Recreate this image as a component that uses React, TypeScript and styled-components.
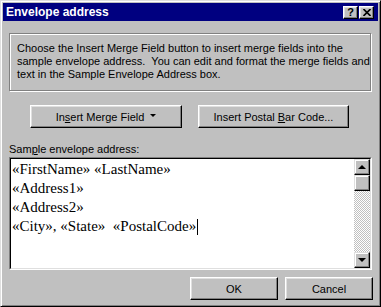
import styled, { createGlobalStyle } from 'styled-components';

const FACE = '#c0c0c0';

const GlobalStyle = createGlobalStyle`
  html, body {
    margin: 0;
    padding: 0;
    background: ${FACE};
  }

  body {
    font-family: 'Liberation Sans', Arial, sans-serif;
    font-size: 11px;
    color: #000;
  }
`;

const Window = styled.div`
  box-sizing: border-box;
  width: 381px;
  height: 307px;
  display: flex;
  flex-direction: column;
  padding: 2px;
  background: ${FACE};
  border: 1px solid;
  border-color: #dfdfdf #000 #000 #dfdfdf;
  box-shadow: inset 1px 1px #fff, inset -1px -1px #808080;
`;

const TitleBar = styled.div`
  height: 18px;
  display: flex;
  align-items: center;
  padding: 0 4px 0 3px;
  background: #000080;
  color: #fff;
  font-weight: 700;
  font-size: 12px;
  flex-shrink: 0;
`;

const CaptionButtons = styled.div`
  display: flex;
  gap: 1px;
  margin-left: auto;
`;

const CaptionButton = styled.div`
  box-sizing: border-box;
  width: 15px;
  height: 13px;
  display: flex;
  align-items: center;
  justify-content: center;
  background: ${FACE};
  color: #000;
  font-size: 11px;
  font-weight: 700;
  border: 1px solid;
  border-color: #fff #000 #000 #fff;
  box-shadow: inset -1px -1px #808080, inset 1px 1px #dfdfdf;
`;

const Body = styled.div`
  display: flex;
  flex-direction: column;
  padding: 12px 6px 0;
`;

const GroupBox = styled.div`
  box-sizing: border-box;
  width: 362px;
  height: 58px;
  padding: 8px 7px 0;
  line-height: 13px;
  white-space: pre;
  border: 1px solid #808080;
  box-shadow: inset 1px 1px #fff, 1px 1px #fff;
`;

const ButtonRow = styled.div<{ $end?: boolean }>`
  display: flex;
  gap: ${({ $end }) => ($end ? '7px' : '16px')};
  justify-content: ${({ $end }) => ($end ? 'flex-end' : 'flex-start')};
  padding-left: ${({ $end }) => ($end ? '0' : '21px')};
  margin-right: ${({ $end }) => ($end ? '-1px' : '0')};
  margin-top: ${({ $end }) => ($end ? '7px' : '14px')};
`;

const PushButton = styled.div<{ $width: number }>`
  box-sizing: border-box;
  width: ${({ $width }) => $width}px;
  height: 23px;
  display: flex;
  align-items: center;
  justify-content: center;
  background: ${FACE};
  border: 1px solid;
  border-color: #fff #000 #000 #fff;
  box-shadow: inset -1px -1px #808080, inset 1px 1px #dfdfdf;
`;

const DropArrow = styled.span`
  display: inline-block;
  margin-left: 6px;
  width: 0;
  height: 0;
  border-left: 3px solid transparent;
  border-right: 3px solid transparent;
  border-top: 3px solid #000;
  position: relative;
  top: -1px;
`;

const Label = styled.div`
  margin-top: 15px;
  line-height: 13px;
  margin-bottom: 1px;
`;

const Field = styled.div`
  box-sizing: border-box;
  height: 113px;
  border: 1px solid;
  border-color: #808080 #fff #fff #808080;
  display: flex;
`;

const FieldInner = styled.div`
  flex: 1;
  display: flex;
  border: 1px solid;
  border-color: #000 #dfdfdf #dfdfdf #000;
  background: #fff;
`;

const AddressText = styled.div`
  flex: 1;
  padding: 1px 0 0 1px;
  font-family: 'Liberation Serif', 'Times New Roman', serif;
  font-size: 15px;
  line-height: 19px;
  white-space: pre;
`;

const Caret = styled.span`
  display: inline-block;
  width: 1px;
  height: 16px;
  margin-left: 1px;
  background: #000;
  vertical-align: -4px;
`;

const ScrollBar = styled.div`
  width: 16px;
  display: flex;
  flex-direction: column;
`;

const ScrollButton = styled.div`
  box-sizing: border-box;
  width: 16px;
  height: 16px;
  display: flex;
  align-items: center;
  justify-content: center;
  background: ${FACE};
  border: 1px solid;
  border-color: #dfdfdf #000 #000 #dfdfdf;
  box-shadow: inset -1px -1px #808080, inset 1px 1px #fff;
`;

const Track = styled.div`
  flex: 1;
  background: repeating-conic-gradient(${FACE} 0 25%, #fff 0 50%) 0 0 / 2px 2px;
`;

const Arrow = styled.span<{ $down?: boolean }>`
  width: 0;
  height: 0;
  border-left: 4px solid transparent;
  border-right: 4px solid transparent;
  ${({ $down }) =>
    $down ? 'border-top: 4px solid #000;' : 'border-bottom: 4px solid #000;'}
`;

const App = () => {
  return (
    <>
      <GlobalStyle />
      <Window>
        <TitleBar>
          Envelope address
          <CaptionButtons>
            <CaptionButton>?</CaptionButton>
            <CaptionButton>
              <svg width="8" height="7" viewBox="0 0 8 7">
                <path d="M0.5 0 L7.5 7 M7.5 0 L0.5 7" stroke="#000" strokeWidth="1.6" />
              </svg>
            </CaptionButton>
          </CaptionButtons>
        </TitleBar>
        <Body>
          <GroupBox>
            {'Choose the Insert Merge Field button to insert merge fields into the\n' +
              'sample envelope address.  You can edit and format the merge fields and\n' +
              'text in the Sample Envelope Address box.'}
          </GroupBox>
          <ButtonRow>
            <PushButton $width={152}>
              <span>
                In<u>s</u>ert Merge Field
              </span>
              <DropArrow />
            </PushButton>
            <PushButton $width={151}>
              <span>
                Insert Postal <u>B</u>ar Code...
              </span>
            </PushButton>
          </ButtonRow>
          <Label>
            Sam<u>p</u>le envelope address:
          </Label>
          <Field>
            <FieldInner>
              <AddressText>
                {'«FirstName» «LastName»\n«Address1»\n«Address2»\n«City», «State»  «PostalCode»'}
                <Caret />
              </AddressText>
              <ScrollBar>
                <ScrollButton>
                  <Arrow />
                </ScrollButton>
                <ScrollButton />
                <Track />
                <ScrollButton>
                  <Arrow $down />
                </ScrollButton>
              </ScrollBar>
            </FieldInner>
          </Field>
          <ButtonRow $end>
            <PushButton $width={88}>OK</PushButton>
            <PushButton $width={88}>Cancel</PushButton>
          </ButtonRow>
        </Body>
      </Window>
    </>
  );
};

export default App;
